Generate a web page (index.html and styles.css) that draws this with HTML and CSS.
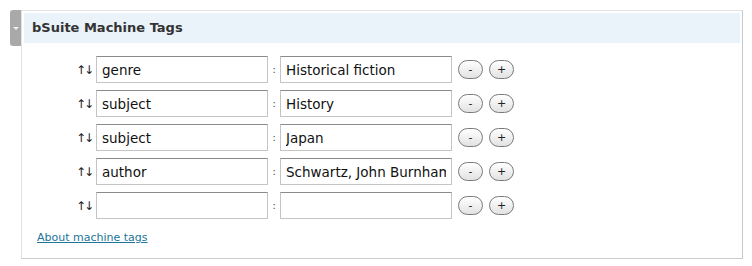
FILE: index.html
```html
<!DOCTYPE html>
<html lang="en">
<head>
    <meta charset="UTF-8">
    <title>bSuite Machine Tags</title>
    <link rel="stylesheet" href="styles.css">
</head>
<body>
    <div class="postbox">
        <div class="handle"><span class="handle-arrow"></span></div>
        <div class="box">
            <h3 class="box-title">bSuite Machine Tags</h3>
            <div class="tags">
                <div class="tag-row">
                    <span class="sort">↑↓</span>
                    <input class="tag-key" type="text" value="genre">
                    <span class="colon">:</span>
                    <input class="tag-value" type="text" value="Historical fiction">
                    <button class="pill">-</button>
                    <button class="pill">+</button>
                </div>
                <div class="tag-row">
                    <span class="sort">↑↓</span>
                    <input class="tag-key" type="text" value="subject">
                    <span class="colon">:</span>
                    <input class="tag-value" type="text" value="History">
                    <button class="pill">-</button>
                    <button class="pill">+</button>
                </div>
                <div class="tag-row">
                    <span class="sort">↑↓</span>
                    <input class="tag-key" type="text" value="subject">
                    <span class="colon">:</span>
                    <input class="tag-value" type="text" value="Japan">
                    <button class="pill">-</button>
                    <button class="pill">+</button>
                </div>
                <div class="tag-row">
                    <span class="sort">↑↓</span>
                    <input class="tag-key" type="text" value="author">
                    <span class="colon">:</span>
                    <input class="tag-value" type="text" value="Schwartz, John Burnham">
                    <button class="pill">-</button>
                    <button class="pill">+</button>
                </div>
                <div class="tag-row">
                    <span class="sort">↑↓</span>
                    <input class="tag-key" type="text" value="">
                    <span class="colon">:</span>
                    <input class="tag-value" type="text" value="">
                    <button class="pill">-</button>
                    <button class="pill">+</button>
                </div>
            </div>
            <a class="about" href="#">About machine tags</a>
        </div>
    </div>
</body>
</html>
```

FILE: styles.css
```css
* { box-sizing: border-box; }
body {
    margin: 0;
    font-family: 'DejaVu Sans', Verdana, sans-serif;
    background-color: #ffffff;
    color: #333;
}
.postbox {
    display: flex;
    align-items: flex-start;
    padding: 10px 0 0 10px;
}
.handle {
    width: 11px;
    height: 36px;
    background-color: #a9a9a9;
    border-radius: 3px 0 0 3px;
    display: flex;
    align-items: center;
    justify-content: center;
}
.handle-arrow {
    width: 0;
    height: 0;
    border-left: 3px solid transparent;
    border-right: 3px solid transparent;
    border-top: 3px solid #f2f2f2;
}
.box {
    width: 722px;
    height: 249px;
    border: 1px solid #e2e2e2;
    border-right-color: #c8c8c8;
    border-bottom-color: #cccccc;
    padding: 2px;
}
.box-title {
    margin: 0;
    height: 30px;
    background-color: #eaf2fa;
    font-size: 13px;
    font-weight: bold;
    line-height: 30px;
    padding-left: 8px;
    color: #333;
    width: 716px;
}
.tags {
    display: flex;
    flex-direction: column;
    gap: 7px;
    padding: 13px 0 0 52px;
}
.tag-row {
    display: flex;
    align-items: center;
}
.sort {
    width: 20px;
    font-size: 12px;
    color: #222;
    letter-spacing: -2px;
}
.tag-key, .tag-value {
    width: 172px;
    height: 27px;
    border: 1px solid #c4c4c4;
    border-top-color: #8a8a8a;
    font-family: inherit;
    font-size: 13.5px;
    color: #111;
    padding: 1px 5px 0;
    margin: 0;
}
.colon {
    width: 12px;
    text-align: center;
    font-size: 11px;
    color: #555;
}
.pill {
    width: 25px;
    height: 19px;
    margin-left: 6px;
    padding: 0;
    border: 1px solid #7a7a7a;
    border-radius: 10px;
    background: linear-gradient(#ffffff, #e2e2e2);
    font-family: inherit;
    font-size: 11px;
    line-height: 16px;
    color: #222;
}
.about {
    display: inline-block;
    margin: 12px 0 0 13px;
    font-size: 11px;
    color: #21759b;
}
```
